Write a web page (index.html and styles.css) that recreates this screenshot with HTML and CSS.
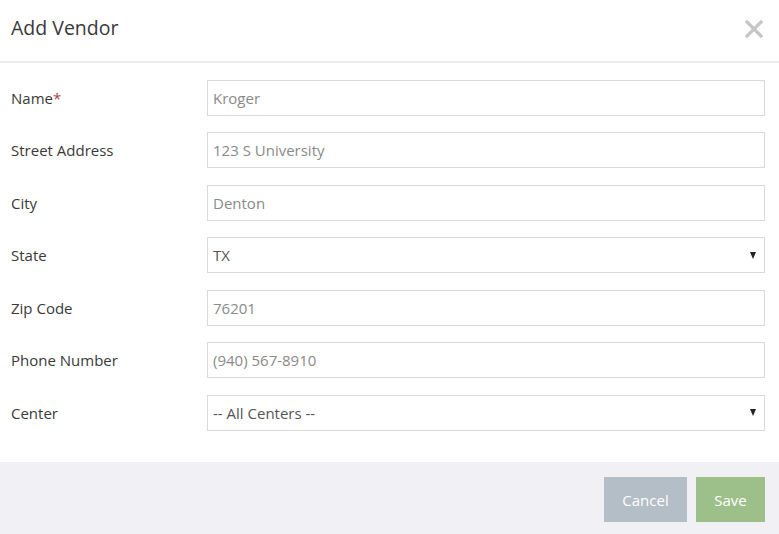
FILE: index.html
```html
<!DOCTYPE html>
<html>
<head>
<meta charset="utf-8">
<link rel="stylesheet" href="styles.css">
</head>
<body>
<div class="modal">
  <div class="modal-header">
    <h1 class="title">Add Vendor</h1>
    <svg class="close" width="18" height="18" viewBox="0 0 18 18"><path d="M2 2 L16 16 M16 2 L2 16" stroke="#c6c6c6" stroke-width="3.2" stroke-linecap="square"/></svg>
  </div>
  <div class="modal-body">
    <div class="row"><label class="label">Name<span class="req">*</span></label><div class="field"><span class="ph">Kroger</span></div></div>
    <div class="row"><label class="label">Street Address</label><div class="field"><span class="ph">123 S University</span></div></div>
    <div class="row"><label class="label">City</label><div class="field"><span class="ph">Denton</span></div></div>
    <div class="row"><label class="label">State</label><div class="field select"><span class="val">TX</span><span class="arrow"></span></div></div>
    <div class="row"><label class="label">Zip Code</label><div class="field"><span class="ph">76201</span></div></div>
    <div class="row"><label class="label">Phone Number</label><div class="field"><span class="ph">(940) 567-8910</span></div></div>
    <div class="row"><label class="label">Center</label><div class="field select"><span class="val">-- All Centers --</span><span class="arrow"></span></div></div>
  </div>
  <div class="modal-footer">
    <button class="btn cancel">Cancel</button>
    <button class="btn save">Save</button>
  </div>
</div>
</body>
</html>
```
FILE: styles.css
```css
* { box-sizing: border-box; }
html, body { margin: 0; padding: 0; background: #fff; }
body { font-family: "Open Sans", "Noto Sans", sans-serif; color: #3a3a3a; width: 779px; height: 534px; overflow: hidden; }
.modal { display: flex; flex-direction: column; height: 534px; }
.modal-header { height: 63px; border-bottom: 2px solid #ececec; display: flex; align-items: center; justify-content: space-between; padding: 0 16px 0 11px; }
.title { margin: 0; font-size: 19.5px; font-weight: 400; color: #3a3a3a; position: relative; top: -3px; }
.close { display: block; position: relative; top: -2px; }
.modal-body { padding: 16.5px 14px 31.5px 11px; display: flex; flex-direction: column; gap: 16.5px; }
.row { display: flex; align-items: center; height: 36px; }
.label { width: 196px; font-size: 15px; color: #3a3a3a; }
.req { color: #a94442; }
.field { flex: 1; height: 36px; border: 1px solid #d9d9d9; display: flex; align-items: center; justify-content: space-between; padding: 0 8px 0 5px; font-size: 15px; }
.ph { color: #8a8a8a; }
.val { color: #555; }
.arrow { width: 0; height: 0; border-left: 3.5px solid transparent; border-right: 3.5px solid transparent; border-top: 7px solid #222; }
.modal-footer { flex: 1; background: #f1f1f5; display: flex; justify-content: flex-end; align-items: flex-start; padding: 15px 14px 0 0; gap: 9px; }
.btn { height: 45px; border: none; font-family: "Open Sans", "Noto Sans", sans-serif; font-size: 15px; color: #fff; padding: 0; }
.cancel { width: 83px; background: #b3bec6; }
.save { width: 69px; background: #9dbf89; }
```
